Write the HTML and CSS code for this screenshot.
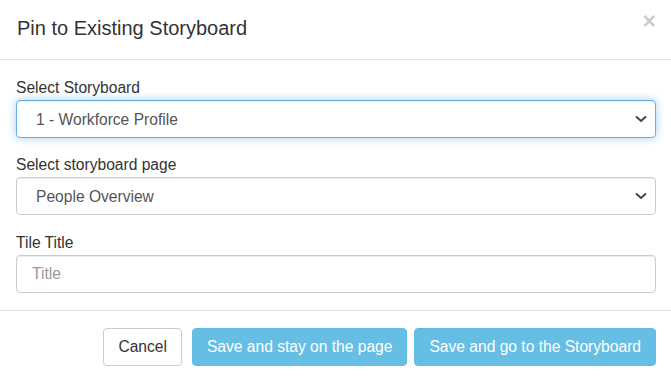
FILE: index.html
```html
<!DOCTYPE html>
<html lang="en">
<head>
    <meta charset="UTF-8">
    <title>Pin to Existing Storyboard</title>
    <link rel="stylesheet" href="styles.css">
</head>
<body>

    <div class="modal-content">
        <div class="modal-header">
            <h4 class="modal-title">Pin to Existing Storyboard</h4>
            <button class="close" type="button">&times;</button>
        </div>

        <div class="modal-body">
            <div class="form-group">
                <label for="storyboard">Select Storyboard</label>
                <div class="select-wrap">
                    <select id="storyboard" class="form-control focused">
                        <option>1 - Workforce Profile</option>
                    </select>
                    <svg class="chevron" width="12" height="8" viewBox="0 0 12 8">
                        <polyline points="1,1.5 6,6 11,1.5" fill="none" stroke="#444" stroke-width="2"/>
                    </svg>
                </div>
            </div>
            <div class="form-group">
                <label for="storyboardPage">Select storyboard page</label>
                <div class="select-wrap">
                    <select id="storyboardPage" class="form-control">
                        <option>People Overview</option>
                    </select>
                    <svg class="chevron" width="12" height="8" viewBox="0 0 12 8">
                        <polyline points="1,1.5 6,6 11,1.5" fill="none" stroke="#444" stroke-width="2"/>
                    </svg>
                </div>
            </div>
            <div class="form-group">
                <label for="tileTitle">Tile Title</label>
                <input id="tileTitle" class="form-control input" type="text" placeholder="Title">
            </div>
        </div>

        <div class="modal-footer">
            <button class="btn btn-default cancel">Cancel</button>
            <button class="btn btn-info">Save and stay on the page</button>
            <button class="btn btn-info">Save and go to the Storyboard</button>
        </div>
    </div>

</body>
</html>
```

FILE: styles.css
```css
:root {
    --text: #333;
    --muted: #555;
    --border: #ccc;
    --divider: #e5e5e5;
    --info: #66bee4;
    --focus: #66afe9;
    --font-main: "Liberation Sans", Arial, sans-serif;
}

html, body {
    margin: 0;
    background: #fff;
    font-family: var(--font-main);
    color: var(--text);
}

.modal-content {
    width: 671px;
    height: 383px;
    background: #fff;
    overflow: hidden;
}

.modal-header {
    position: relative;
    padding: 14px 16px 17px 17px;
    border-bottom: 1px solid var(--divider);
}

.modal-title {
    margin: 0;
    font-size: 20px;
    font-weight: 400;
    line-height: 28px;
    color: var(--text);
}

.close {
    position: absolute;
    top: 9px;
    right: 15px;
    padding: 0;
    border: none;
    background: none;
    font-family: var(--font-main);
    font-size: 23px;
    font-weight: 700;
    line-height: 24px;
    color: #000;
    opacity: 0.2;
    cursor: pointer;
}

.modal-body {
    padding: 15px 15px 17px 16px;
}

.form-group {
    margin-bottom: 15px;
}

.form-group:first-child {
    margin-bottom: 14px;
}

.form-group:last-child {
    margin-bottom: 0;
}

label {
    display: block;
    margin-bottom: 0;
    font-size: 15.6px;
    line-height: 25px;
    color: var(--text);
}

.select-wrap {
    position: relative;
}

.form-control {
    display: block;
    box-sizing: border-box;
    width: 100%;
    height: 38px;
    margin: 0;
    padding: 0 30px 0 19px;
    border: 1px solid var(--border);
    border-radius: 4px;
    background: #fff;
    font-family: var(--font-main);
    font-size: 15.6px;
    color: var(--muted);
    box-shadow: inset 0 1px 1px rgba(0, 0, 0, 0.075);
    appearance: none;
    -webkit-appearance: none;
    outline: none;
}

.form-control.focused {
    border-color: var(--focus);
    box-shadow: inset 0 1px 1px rgba(0, 0, 0, 0.075), 0 0 8px rgba(102, 175, 233, 0.6);
}

.input {
    padding-left: 15px;
}

.input::placeholder {
    color: #999;
}

.chevron {
    position: absolute;
    top: 15px;
    right: 9px;
    pointer-events: none;
}

.modal-footer {
    display: flex;
    justify-content: flex-end;
    gap: 7px;
    padding: 17px 15px 17px 16px;
    border-top: 1px solid var(--divider);
}

.btn {
    box-sizing: border-box;
    height: 38px;
    padding: 0 14px;
    border: 1px solid transparent;
    border-radius: 4px;
    font-family: var(--font-main);
    font-size: 15.6px;
    line-height: 36px;
    cursor: pointer;
}

.btn-default {
    background: #fff;
    border-color: var(--border);
    color: var(--text);
}

.btn-info {
    background: var(--info);
    border-color: #62bbe2;
    color: #fff;
}

.cancel {
    margin-right: 3px;
}
```
